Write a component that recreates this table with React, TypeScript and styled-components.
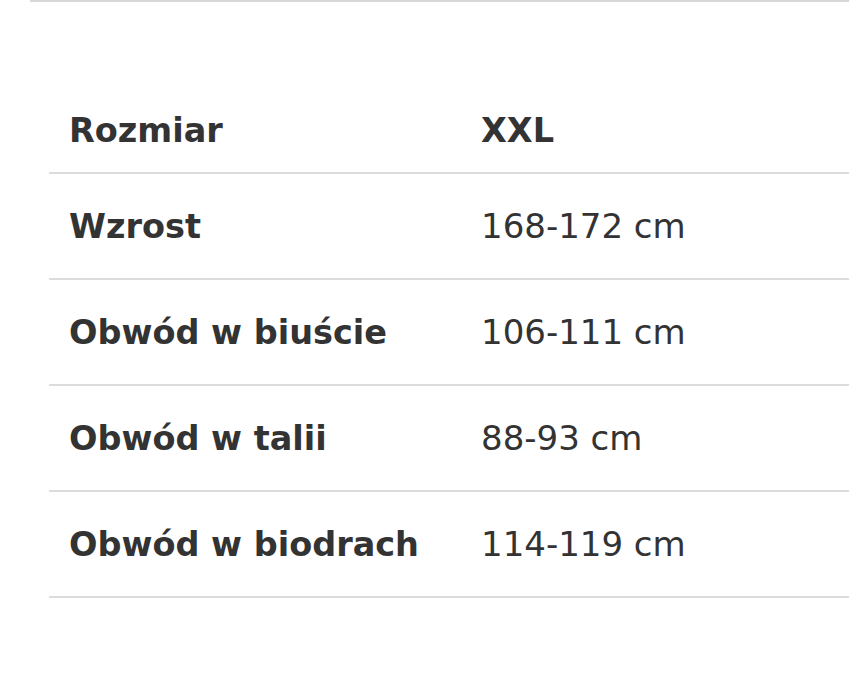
import React from "react";
import styled, { createGlobalStyle } from "styled-components";

const Global = createGlobalStyle`
  html, body { margin: 0; padding: 0; background: #fff; }
  body { font-family: "DejaVu Sans", "Lato", sans-serif; color: #333; }
`;

const Page = styled.div`
  width: 849px;
  height: 677px;
  overflow: hidden;
  display: flex;
  flex-direction: column;
`;

const TopRule = styled.div`
  margin-left: 30px;
  height: 2px;
  background: #d8d8d8;
`;

const Table = styled.div`
  margin-top: 86px;
  margin-left: 49px;
  display: flex;
  flex-direction: column;
`;

const Row = styled.div<{ $head?: boolean }>`
  display: grid;
  grid-template-columns: 432px 1fr;
  align-items: center;
  height: ${(p) => (p.$head ? "84px" : "104px")};
  border-bottom: 2px solid #dcdcdc;
`;

const Label = styled.div`
  padding-left: 20px;
  font-size: 33.5px;
  font-weight: 700;
  color: #333;
`;

const Value = styled.div<{ $bold?: boolean }>`
  font-size: ${(p) => (p.$bold ? "33.5px" : "34px")};
  font-weight: ${(p) => (p.$bold ? 700 : 400)};
  color: #333;
`;

const rows = [
  ["Wzrost", "168-172 cm"],
  ["Obwód w biuście", "106-111 cm"],
  ["Obwód w talii", "88-93 cm"],
  ["Obwód w biodrach", "114-119 cm"],
];

export default function App() {
  return (
    <Page>
      <Global />
      <TopRule />
      <Table>
        <Row $head>
          <Label>Rozmiar</Label>
          <Value $bold>XXL</Value>
        </Row>
        {rows.map(([l, v]) => (
          <Row key={l}>
            <Label>{l}</Label>
            <Value>{v}</Value>
          </Row>
        ))}
      </Table>
    </Page>
  );
}
